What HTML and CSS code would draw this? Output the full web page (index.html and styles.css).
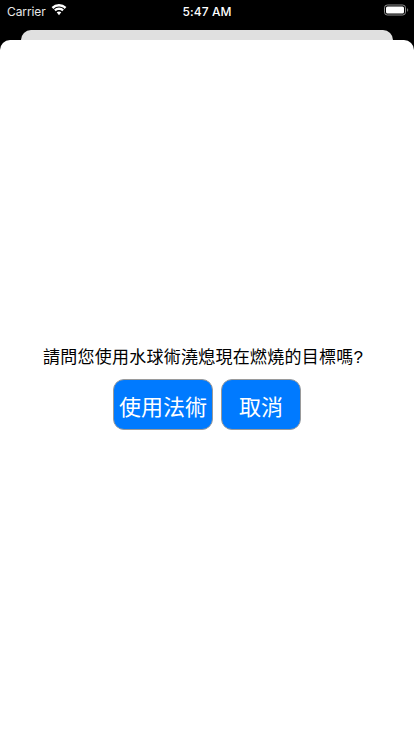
FILE: index.html
```html
<!DOCTYPE html>
<html lang="zh-Hant">
<head>
<meta charset="utf-8">
<title>水球術</title>
<link rel="stylesheet" href="styles.css">
</head>
<body>
<div class="status">
  <div class="status-left">
    <span class="carrier">Carrier</span>
    <svg class="wifi" width="16" height="12" viewBox="0 0 16 12"><path d="M8 2.600c2.200 0 4.200.9 5.700 2.300l1.700-1.800A10.600 10.600 0 0 0 8 .1 10.600 10.600 0 0 0 .6 3.100l1.700 1.800A8.200 8.200 0 0 1 8 2.600z" fill="#fff"/><path d="M8 6c1.300 0 2.400.5 3.300 1.300l1.600-1.800A7.100 7.100 0 0 0 8 3.600a7.100 7.100 0 0 0-4.900 1.900l1.600 1.800C5.600 6.500 6.700 6 8 6z" fill="#fff"/><path d="M8 7.400c-.9 0-1.700.3-2.300.9L8 11.200l2.300-2.900c-.6-.6-1.400-.9-2.300-.9z" fill="#fff"/></svg>
  </div>
  <span class="time">5:47 AM</span>
  <div class="status-right">
    <svg class="battery" width="25" height="12" viewBox="0 0 25 12"><rect x="0.500" y="1" width="21" height="10" rx="2.800" fill="none" stroke="#8e8e8e"/><rect x="2" y="2.500" width="18" height="7" rx="1.500" fill="#fff"/><path d="M23 4.300v3.400c.7-.2 1.200-.9 1.200-1.700s-.5-1.500-1.200-1.700z" fill="#6e6e6e"/></svg>
  </div>
</div>
<div class="back-sheet"></div>
<main class="sheet">
  <p class="question">請問您使用水球術澆熄現在燃燒的目標嗎?</p>
  <div class="actions">
    <button class="btn btn-cast" type="button">使用法術</button>
    <button class="btn btn-cancel" type="button">取消</button>
  </div>
</main>
</body>
</html>
```
FILE: styles.css
```css
* { box-sizing: border-box; }
html, body { margin: 0; height: 100%; }
body {
  width: 414px;
  height: 736px;
  overflow: hidden;
  background: #000;
  display: flex;
  flex-direction: column;
  font-family: "Liberation Sans", "Noto Sans CJK TC", sans-serif;
}
.status {
  height: 20px;
  flex: none;
  display: grid;
  grid-template-columns: 1fr auto 1fr;
  align-items: center;
  color: #fff;
  padding: 0 5px 0 7px;
}
.status-left { display: flex; align-items: center; gap: 5px; }
.carrier { font: 12px "Inter", sans-serif; color: #e8e8e8; padding-top: 2px; letter-spacing: -0.1px; }
.time { font: 500 12px "Inter", sans-serif; letter-spacing: 0.1px; padding-top: 2px; margin-right: 2px; }
.status-right { display: flex; justify-content: flex-end; }
.wifi, .battery { display: block; }
.back-sheet {
  flex: none;
  height: 10px;
  margin: 10px 21px 0;
  background: #e0e0e0;
  border-radius: 10px 10px 0 0;
}
.sheet {
  flex: 1;
  background: #fff;
  border-radius: 10px 10px 0 0;
  display: flex;
  flex-direction: column;
  align-items: center;
  justify-content: center;
  padding-bottom: 1px;
}
.question {
  margin: 0 8px 8px 0;
  font-size: 17px;
  line-height: 26px;
  letter-spacing: 0.25px;
  color: #000;
  white-space: nowrap;
}
.actions { display: flex; gap: 7.500px; }
.btn {
  height: 51px;
  border: 1px solid #9a9a9a;
  border-radius: 11px;
  background: #007aff;
  color: #fff;
  font: 22px "Liberation Sans", "Noto Sans CJK TC", sans-serif;
  padding: 0;
}
.btn-cast { width: 100.500px; }
.btn-cancel { width: 80.500px; }
```
